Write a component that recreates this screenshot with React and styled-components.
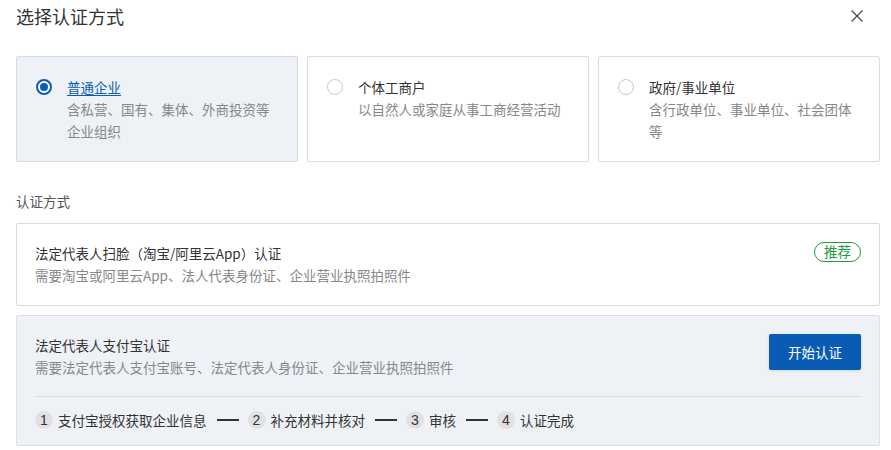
import React from "react";
import styled, { createGlobalStyle } from "styled-components";

const Global = createGlobalStyle`
  html, body { margin: 0; padding: 0; background: #fff; }
  body { font-family: "Noto Sans CJK SC", "Noto Sans", sans-serif; color: #333; }
  * { box-sizing: border-box; }
`;

const Page = styled.div`
  width: 891px;
  height: 450px;
  overflow: hidden;
  padding: 0 12px 0 16px;
`;

const Header = styled.div`
  display: flex;
  align-items: center;
  justify-content: space-between;
  height: 31px;
  padding-right: 16px;
`;

const Title = styled.h1`
  margin: 0;
  font-size: 18px;
  font-weight: 400;
  color: #333;
  line-height: 26px;
`;

const Close = styled.button`
  border: 0;
  background: none;
  padding: 0;
  width: 12px;
  height: 12px;
  display: flex;
  cursor: pointer;
`;

const Types = styled.div`
  display: grid;
  grid-template-columns: 282px 282px 282px;
  column-gap: 9px;
  margin-top: 25px;
`;

const TypeCard = styled.div`
  display: flex;
  gap: 15px;
  padding: 19px;
  border: 1px solid ${(p) => (p.$active ? "#d5dae3" : "#dcdcdc")};
  background: ${(p) => (p.$active ? "#eef1f6" : "#fff")};
  border-radius: 2px;
`;

const Radio = styled.span`
  flex: none;
  width: 16px;
  height: 16px;
  margin-top: 3px;
  border-radius: 50%;
  border: ${(p) => (p.$checked ? "2px solid #0b5cb5" : "1px solid #c8c8c8")};
  background: #fff;
  display: flex;
  align-items: center;
  justify-content: center;
  &::after {
    content: "";
    display: ${(p) => (p.$checked ? "block" : "none")};
    width: 8px;
    height: 8px;
    border-radius: 50%;
    background: #0b5cb5;
  }
`;

const TypeText = styled.div`
  display: flex;
  flex-direction: column;
`;

const TypeName = styled.div`
  font-size: 13.5px;
  line-height: 22px;
  color: ${(p) => (p.$active ? "#0b5cb5" : "#333")};
  text-decoration: ${(p) => (p.$active ? "underline" : "none")};
  text-underline-offset: 2px;
`;

const Desc = styled.div`
  font-size: 13.5px;
  line-height: 22px;
  color: #888;
`;

const SectionLabel = styled.div`
  font-size: 13.5px;
  line-height: 22px;
  color: #555;
  margin-top: 28px;
`;

const MethodCard = styled.div`
  width: 864px;
  border: 1px solid ${(p) => (p.$shaded ? "#dadee6" : "#dcdcdc")};
  background: ${(p) => (p.$shaded ? "#eef1f6" : "#fff")};
  border-radius: 2px;
  padding: 18px 18px ${(p) => (p.$shaded ? 14 : 19)}px 18px;
  margin-top: ${(p) => p.$mt}px;
`;

const MethodTop = styled.div`
  display: flex;
  justify-content: space-between;
  align-items: flex-start;
`;

const MethodName = styled.div`
  font-size: 13.5px;
  line-height: 22px;
  color: #333;
`;

const Badge = styled.span`
  display: inline-flex;
  align-items: center;
  justify-content: center;
  width: 47px;
  height: 20px;
  border: 1px solid #1c9c3e;
  border-radius: 10px;
  color: #1c9c3e;
  font-size: 13.5px;
  line-height: 1;
`;

const PrimaryButton = styled.button`
  width: 92px;
  height: 36px;
  border: 0;
  border-radius: 2px;
  background: #0a5bb3;
  color: #fff;
  font-family: inherit;
  font-size: 13.5px;
  cursor: pointer;
  box-shadow: 0 1px 3px rgba(0, 0, 0, 0.12);
`;

const Divider = styled.div`
  height: 1px;
  background: #dcdfe4;
  margin-top: 18px;
`;

const Steps = styled.div`
  display: flex;
  align-items: center;
  height: 22px;
  margin-top: 12px;
`;

const StepNum = styled.span`
  width: 18px;
  height: 18px;
  border-radius: 50%;
  background: #e1e1e1;
  color: #333;
  font-size: 14px;
  display: flex;
  align-items: center;
  justify-content: center;
  margin-right: 5px;
  font-family: "Liberation Sans", sans-serif;
`;

const StepText = styled.span`
  font-size: 13.5px;
  line-height: 22px;
  color: #333;
`;

const StepDash = styled.span`
  width: 22px;
  height: 2px;
  background: #333;
  margin: 0 9px 0 10px;
`;

const types = [
  { name: "普通企业", desc: "含私营、国有、集体、外商投资等企业组织", active: true },
  { name: "个体工商户", desc: "以自然人或家庭从事工商经营活动" },
  { name: "政府/事业单位", desc: "含行政单位、事业单位、社会团体等" },
];

const steps = ["支付宝授权获取企业信息", "补充材料并核对", "审核", "认证完成"];

export default function App() {
  return (
    <>
      <Global />
      <Page>
        <Header>
          <Title>选择认证方式</Title>
          <Close aria-label="关闭">
            <svg width="12" height="12" viewBox="0 0 12 12">
              <path d="M0.5 0.5L11.5 11.5M11.5 0.5L0.5 11.5" stroke="#444" strokeWidth="1.2" fill="none" />
            </svg>
          </Close>
        </Header>

        <Types>
          {types.map((t) => (
            <TypeCard key={t.name} $active={t.active}>
              <Radio $checked={t.active} />
              <TypeText>
                <TypeName $active={t.active}>{t.name}</TypeName>
                <Desc>{t.desc}</Desc>
              </TypeText>
            </TypeCard>
          ))}
        </Types>

        <SectionLabel>认证方式</SectionLabel>

        <MethodCard $mt={11}>
          <MethodTop>
            <div>
              <MethodName>法定代表人扫脸（淘宝/阿里云App）认证</MethodName>
              <Desc>需要淘宝或阿里云App、法人代表身份证、企业营业执照拍照件</Desc>
            </div>
            <Badge>推荐</Badge>
          </MethodTop>
        </MethodCard>

        <MethodCard $shaded $mt={9}>
          <MethodTop>
            <div>
              <MethodName>法定代表人支付宝认证</MethodName>
              <Desc>需要法定代表人支付宝账号、法定代表人身份证、企业营业执照拍照件</Desc>
            </div>
            <PrimaryButton>开始认证</PrimaryButton>
          </MethodTop>
          <Divider />
          <Steps>
            {steps.map((s, i) => (
              <React.Fragment key={s}>
                {i > 0 && <StepDash />}
                <StepNum>{i + 1}</StepNum>
                <StepText>{s}</StepText>
              </React.Fragment>
            ))}
          </Steps>
        </MethodCard>
      </Page>
    </>
  );
}
